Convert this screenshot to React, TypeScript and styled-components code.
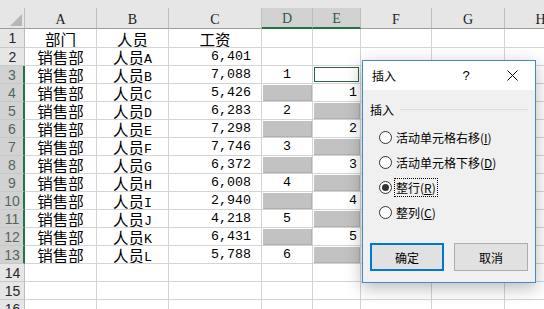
import React from "react";
import styled, { createGlobalStyle, css } from "styled-components";

const GlobalStyle = createGlobalStyle`
  html, body {
    margin: 0;
    padding: 0;
    background: #fff;
    overflow: hidden;
  }
`;

const COLS = [
  { key: "A", w: 72 },
  { key: "B", w: 72 },
  { key: "C", w: 93 },
  { key: "D", w: 51 },
  { key: "E", w: 48 },
  { key: "F", w: 71 },
  { key: "G", w: 73 },
  { key: "H", w: 72 },
];

const SELECTED_COLS = ["D", "E"];
const SALARIES = [
  "6,401", "7,088", "5,426", "6,283", "7,298", "7,746",
  "6,372", "6,008", "2,940", "4,218", "6,431", "5,788",
];
const LETTERS = "ABCDEFGHIJKL";

const GRID = "#d4d4d4";
const HEAD_BG = "#e6e6e6";
const HEAD_SEL = "#d2d2d2";
const GREEN = "#217346";

const Screen = styled.div`
  position: relative;
  width: 544px;
  height: 309px;
  overflow: hidden;
  background: #fff;
`;

const TopStrip = styled.div`
  height: 8px;
  background: ${HEAD_BG};
`;

const Sheet = styled.div`
  display: grid;
  grid-template-columns: 25px ${COLS.map((c) => `${c.w}px`).join(" ")};
  grid-template-rows: 21px 19px;
  grid-auto-rows: 18px;
`;

const Corner = styled.div`
  background: ${HEAD_BG};
  border-right: 1px solid #bdbdbd;
  border-bottom: 1px solid #9e9e9e;
  display: flex;
  align-items: flex-end;
  justify-content: flex-end;
  padding: 0 2px 2px 0;
`;

const ColHead = styled.div<{ $sel?: boolean }>`
  background: ${(p) => (p.$sel ? HEAD_SEL : HEAD_BG)};
  border-right: 1px solid #bdbdbd;
  border-bottom: ${(p) => (p.$sel ? `2px solid ${GREEN}` : "1px solid #9e9e9e")};
  display: flex;
  align-items: center;
  justify-content: center;
  padding-top: 3px;
  font-family: "Liberation Serif", "DejaVu Serif", serif;
  font-size: 14px;
  color: ${(p) => (p.$sel ? "#2f5c43" : "#222")};
`;

const RowHead = styled.div<{ $sel?: boolean }>`
  background: ${(p) => (p.$sel ? HEAD_SEL : HEAD_BG)};
  border-right: ${(p) => (p.$sel ? `2px solid ${GREEN}` : "1px solid #bdbdbd")};
  border-bottom: 1px solid #c8c8c8;
  display: flex;
  align-items: center;
  justify-content: center;
  padding-left: 1px;
  font-family: "Liberation Sans", Arial, sans-serif;
  font-size: 14px;
  color: ${(p) => (p.$sel ? "#56665c" : "#262626")};
`;

const Cell = styled.div<{
  $align?: "left" | "center" | "right";
  $pad?: number;
  $fill?: boolean;
  $active?: boolean;
}>`
  border-right: 1px solid ${GRID};
  border-bottom: 1px solid ${GRID};
  display: flex;
  align-items: center;
  justify-content: ${(p) =>
    p.$align === "right" ? "flex-end" : p.$align === "left" ? "flex-start" : "center"};
  padding-right: ${(p) => p.$pad ?? 0}px;
  padding-top: 1px;
  font-family: "Noto Sans CJK SC", "Liberation Serif", serif;
  font-size: 15.5px;
  line-height: 18px;
  color: #000;
  overflow: hidden;
  white-space: nowrap;
  ${(p) =>
    p.$fill &&
    css`
      background: #c2c2c2;
      box-shadow: inset 1px 1px 0 #fff, inset -1px -1px 0 #b0b0b0;
    `}
  ${(p) =>
    p.$active &&
    css`
      box-shadow: inset 1px 0 0 #fff, inset 0 0 0 1px #fff, inset 0 0 0 2px #2c6446;
    `}
`;

const Latin = styled.span<{ $drop?: boolean }>`
  font-family: "Liberation Mono", "DejaVu Sans Mono", monospace;
  font-size: 13.3px;
  position: relative;
  top: ${(p) => (p.$drop ? "3px" : "0")};
`;

const Dialog = styled.div`
  position: absolute;
  left: 362px;
  top: 60px;
  width: 174px;
  height: 223px;
  box-sizing: border-box;
  border: 1px solid #4389cc;
  background: #f0f0f0;
  box-shadow: 0 5px 16px rgba(0, 0, 0, 0.28);
  display: flex;
  flex-direction: column;
  font-family: "Noto Sans CJK SC", "Liberation Sans", sans-serif;
  font-size: 12px;
  color: #000;
`;

const TitleBar = styled.div`
  height: 29px;
  background: #fff;
  display: flex;
  align-items: center;
  padding-left: 9px;
`;

const Title = styled.div`
  flex: 1;
`;

const TitleButton = styled.div<{ $w: number }>`
  width: ${(p) => p.$w}px;
  height: 29px;
  display: flex;
  align-items: center;
  justify-content: center;
  font-family: "Liberation Sans", Arial, sans-serif;
  font-size: 13px;
`;

const Body = styled.div`
  flex: 1;
  display: flex;
  flex-direction: column;
  padding: 11px 7px 11px 7px;
`;

const GroupHeader = styled.div`
  height: 16px;
  display: flex;
  align-items: center;
  gap: 6px;
  &::after {
    content: "";
    flex: 1;
    height: 1px;
    background: #dcdcdc;
  }
`;

const RadioList = styled.div`
  margin-top: 8px;
  padding-left: 9px;
  display: flex;
  flex-direction: column;
`;

const RadioRow = styled.div`
  height: 25px;
  display: flex;
  align-items: center;
  gap: 2px;
`;

const RadioCircle = styled.span<{ $checked?: boolean }>`
  width: 13px;
  height: 13px;
  box-sizing: border-box;
  border: 1px solid #333;
  border-radius: 50%;
  background: #fff;
  display: flex;
  align-items: center;
  justify-content: center;
  &::after {
    content: "";
    display: ${(p) => (p.$checked ? "block" : "none")};
    width: 7px;
    height: 7px;
    border-radius: 50%;
    background: #333;
  }
`;

const RadioLabel = styled.span<{ $focus?: boolean }>`
  border: 1px dotted ${(p) => (p.$focus ? "#000" : "transparent")};
  padding: 0 1px;
  line-height: 17px;
  u {
    text-decoration: underline;
    text-underline-offset: 1px;
  }
`;

const ButtonRow = styled.div`
  margin-top: auto;
  display: flex;
  gap: 10px;
`;

const Button = styled.div<{ $default?: boolean }>`
  width: 74px;
  height: 28px;
  box-sizing: border-box;
  background: #e1e1e1;
  border: ${(p) => (p.$default ? "2px solid #0078d7" : "1px solid #adadad")};
  display: flex;
  align-items: center;
  justify-content: center;
  font-size: 12px;
`;

const SelectAll = () => (
  <svg width="12" height="12" viewBox="0 0 12 12">
    <polygon points="12,0 12,12 0,12" fill="#b6b6b6" />
  </svg>
);

const CloseIcon = () => (
  <svg width="11" height="11" viewBox="0 0 11 11">
    <path d="M0.5 0.5 L10.5 10.5 M10.5 0.5 L0.5 10.5" stroke="#000" strokeWidth="1" />
  </svg>
);

type CellData = {
  text?: React.ReactNode;
  align?: "left" | "center" | "right";
  pad?: number;
  fill?: boolean;
  active?: boolean;
};

function rowCells(r: number): CellData[] {
  const cells: CellData[] = COLS.map(() => ({}));
  if (r === 1) {
    cells[0] = { text: "部门" };
    cells[1] = { text: "人员" };
    cells[2] = { text: "工资" };
  } else if (r >= 2 && r <= 13) {
    cells[0] = { text: "销售部" };
    cells[1] = {
      text: (
        <>
          人员<Latin $drop>{LETTERS[r - 2]}</Latin>
        </>
      ),
    };
    cells[2] = { text: <Latin>{SALARIES[r - 2]}</Latin>, align: "right", pad: 10 };
  }
  if (r >= 3 && r <= 13) {
    const k = r - 3;
    if (k % 2 === 0) {
      cells[3] = { text: <Latin>{k / 2 + 1}</Latin> };
      cells[4] = r === 3 ? { active: true } : { fill: true };
    } else {
      cells[3] = { fill: true };
      cells[4] = { text: <Latin>{(k + 1) / 2}</Latin>, align: "right", pad: 3 };
    }
  }
  return cells;
}

const RADIOS = [
  { label: "活动单元格右移", key: "I" },
  { label: "活动单元格下移", key: "D" },
  { label: "整行", key: "R", checked: true },
  { label: "整列", key: "C" },
];

export default function App() {
  const rows = Array.from({ length: 16 }, (_, i) => i + 1);
  return (
    <Screen>
      <GlobalStyle />
      <TopStrip />
      <Sheet>
        <Corner>
          <SelectAll />
        </Corner>
        {COLS.map((c) => (
          <ColHead key={c.key} $sel={SELECTED_COLS.includes(c.key)}>
            {c.key}
          </ColHead>
        ))}
        {rows.map((r) => (
          <React.Fragment key={r}>
            <RowHead $sel={r >= 3 && r <= 13}>{r}</RowHead>
            {rowCells(r).map((c, i) => (
              <Cell
                key={i}
                $align={c.align}
                $pad={c.pad}
                $fill={c.fill}
                $active={c.active}
              >
                {c.text}
              </Cell>
            ))}
          </React.Fragment>
        ))}
      </Sheet>

      <Dialog>
        <TitleBar>
          <Title>插入</Title>
          <TitleButton $w={30}>?</TitleButton>
          <TitleButton $w={8} />
          <TitleButton $w={46}>
            <CloseIcon />
          </TitleButton>
        </TitleBar>
        <Body>
          <GroupHeader>插入</GroupHeader>
          <RadioList>
            {RADIOS.map((o) => (
              <RadioRow key={o.key}>
                <RadioCircle $checked={o.checked} />
                <RadioLabel $focus={o.checked}>
                  {o.label}(<u>{o.key}</u>)
                </RadioLabel>
              </RadioRow>
            ))}
          </RadioList>
          <ButtonRow>
            <Button $default>确定</Button>
            <Button>取消</Button>
          </ButtonRow>
        </Body>
      </Dialog>
    </Screen>
  );
}
